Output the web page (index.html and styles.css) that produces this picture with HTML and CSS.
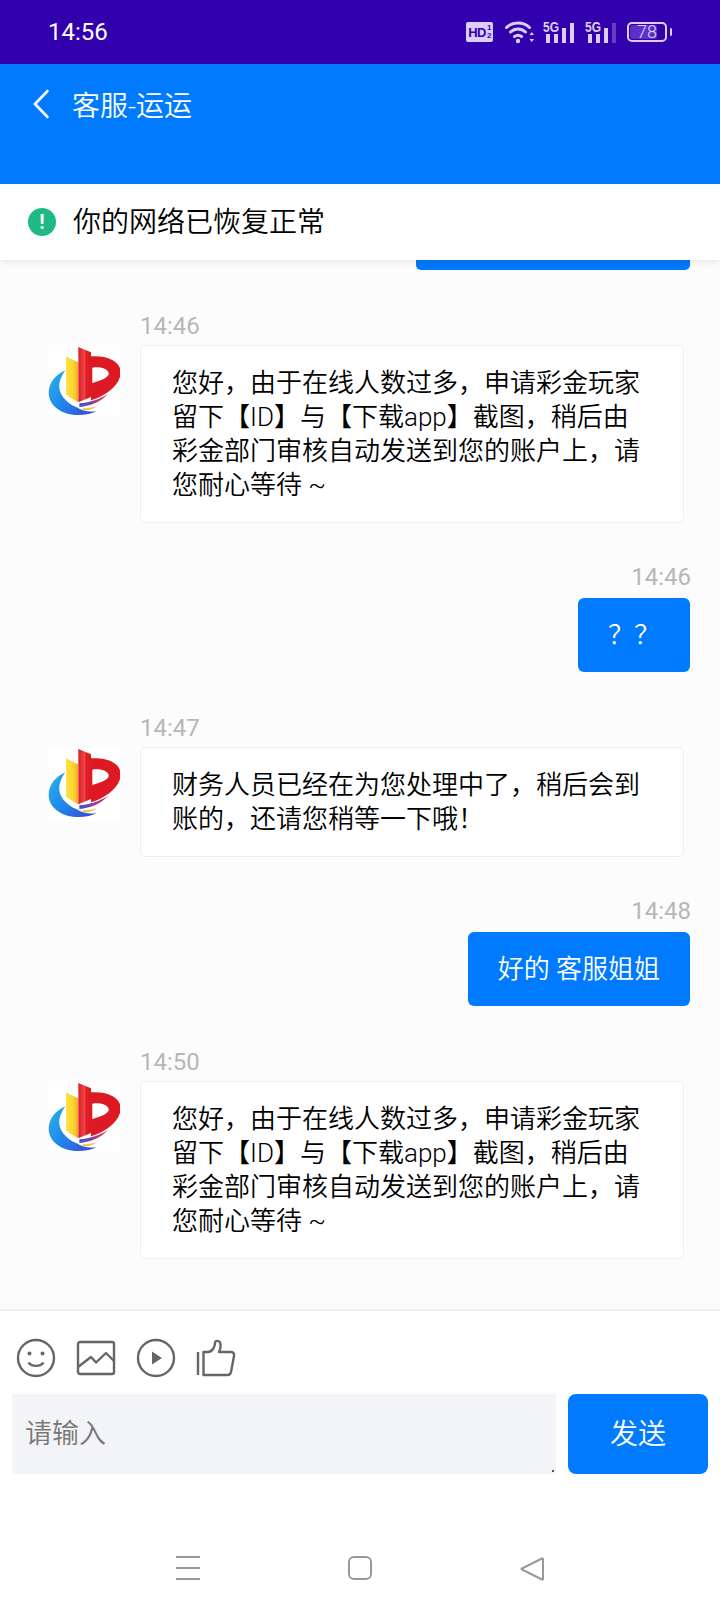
FILE: index.html
```html
<!DOCTYPE html>
<html lang="zh-CN">
<head>
<meta charset="utf-8">
<title>客服-运运</title>
<link rel="stylesheet" href="styles.css">
</head>
<body>
<svg class="defs" width="0" height="0" aria-hidden="true">
  <defs>
    <linearGradient id="lgBlue" x1="0" y1="0" x2="1" y2="0.7">
      <stop offset="0" stop-color="#2ab4ee"/>
      <stop offset="0.55" stop-color="#1f86ea"/>
      <stop offset="1" stop-color="#3550d8"/>
    </linearGradient>
    <linearGradient id="lgYellow" x1="0" y1="0" x2="1" y2="0">
      <stop offset="0" stop-color="#fce345"/>
      <stop offset="0.65" stop-color="#fbd22e"/>
      <stop offset="1" stop-color="#f2a52a"/>
    </linearGradient>
    <linearGradient id="lgBar" x1="0" y1="0" x2="1" y2="0">
      <stop offset="0" stop-color="#dd1a24"/>
      <stop offset="0.5" stop-color="#ec4a48"/>
      <stop offset="0.6" stop-color="#e01e28"/>
      <stop offset="1" stop-color="#dd1a24"/>
    </linearGradient>
    <linearGradient id="lgStripe" x1="0" y1="0" x2="1" y2="0">
      <stop offset="0" stop-color="#3b55d0"/>
      <stop offset="0.5" stop-color="#9a3a98"/>
      <stop offset="1" stop-color="#d83a50"/>
    </linearGradient>
    <symbol id="logo" viewBox="6 6 216 216">
      <rect x="6" y="6" width="216" height="216" fill="#fff"/>
      <path d="M58 82C26 96 8 122 8 150C8 184 40 210 80 215C110 218 135 213 152 204C130 208 108 204 92 193C58 178 36 152 40 122C42 108 50 94 58 82Z" fill="url(#lgBlue)"/>
      <path d="M60 40L96 58V178L60 155Z" fill="url(#lgYellow)"/>
      <path d="M97 12L135 28V162L97 178Z" fill="url(#lgBar)"/>
      <path d="M135 40C182 36 224 54 224 88C224 128 176 160 135 172Z" fill="#dd1a24"/>
      <path d="M139 74C164 70 188 78 188 92C188 104 164 112 139 120Z" fill="#fff"/>
      <path d="M100 181C132 178 162 168 187 152C165 176 135 188 100 192Z" fill="url(#lgStripe)"/>
      <path d="M110 196C126 196 140 194 153 189C142 198 128 203 112 203Z" fill="#e9c548"/>
    </symbol>
  </defs>
</svg>
<div class="page">
  <div class="status">
    <span class="clock">14:56</span>
    <div class="status-icons">
      <span class="hd"><span>HD</span><span class="hd-sub"><i>1</i><i>2</i></span></span>
      <svg class="wifi" width="29" height="24" viewBox="0 0 29 24">
        <path d="M1.500 7.500C7.500 1.500 18.500 1.500 24.500 7.500M5.500 12C10 8 16 8 20.500 12M9.500 16.500C11.500 15 14.500 15 16.500 16.500" fill="none" stroke="currentColor" stroke-width="3" stroke-linecap="round"/>
        <circle cx="13" cy="21" r="2.200" fill="currentColor"/>
        <path d="M24.500 15L29 15L26.750 12ZM24.500 19L29 19L26.750 22Z" fill="currentColor"/>
      </svg>
      <svg class="signal" width="32" height="28" viewBox="0 -4 32 28">
        <text x="0" y="12" class="g5" textLength="16" lengthAdjust="spacingAndGlyphs">5G</text>
        <rect x="3" y="14" width="4" height="9" fill="currentColor"/>
        <rect x="11" y="14" width="4" height="9" fill="currentColor"/>
        <rect x="19" y="8" width="4" height="15" fill="currentColor"/>
        <rect x="27" y="3" width="4" height="20" fill="currentColor"/>
      </svg>
      <svg class="signal" width="32" height="28" viewBox="0 -4 32 28">
        <text x="0" y="12" class="g5" textLength="16" lengthAdjust="spacingAndGlyphs">5G</text>
        <rect x="3" y="14" width="4" height="9" fill="currentColor"/>
        <rect x="11" y="14" width="4" height="9" fill="currentColor"/>
        <rect x="19" y="8" width="4" height="15" fill="currentColor"/>
        <rect x="27" y="3" width="4" height="20" fill="currentColor" opacity=".3"/>
      </svg>
      <span class="battery"><span class="battery-fill"></span><span class="battery-num">78</span></span>
    </div>
  </div>

  <header class="topbar">
    <svg class="back" width="18" height="30" viewBox="0 0 18 30">
      <path d="M15.500 2L3 15L15.500 28" fill="none" stroke="#fff" stroke-width="2.600" stroke-linecap="round" stroke-linejoin="round"/>
    </svg>
    <span class="title">客服-运运</span>
  </header>

  <main class="chat">
    <div class="notice">
      <span class="notice-dot">!</span>
      <span class="notice-text">你的网络已恢复正常</span>
    </div>

    <div class="stub"></div>

    <section class="msg msg-left">
      <svg class="avatar" width="72" height="72"><use href="#logo"/></svg>
      <div class="msg-body">
        <div class="time">14:46</div>
        <div class="bubble">您好，由于在线人数过多，申请彩金玩家留下【ID】与【下载app】截图，稍后由彩金部门审核自动发送到您的账户上，请您耐心等待 ~</div>
      </div>
    </section>

    <section class="msg msg-right">
      <div class="time">14:46</div>
      <div class="bubble-me">？？</div>
    </section>

    <section class="msg msg-left">
      <svg class="avatar" width="72" height="72"><use href="#logo"/></svg>
      <div class="msg-body">
        <div class="time">14:47</div>
        <div class="bubble">财务人员已经在为您处理中了，稍后会到账的，还请您稍等一下哦！</div>
      </div>
    </section>

    <section class="msg msg-right">
      <div class="time">14:48</div>
      <div class="bubble-me">好的 客服姐姐</div>
    </section>

    <section class="msg msg-left">
      <svg class="avatar" width="72" height="72"><use href="#logo"/></svg>
      <div class="msg-body">
        <div class="time">14:50</div>
        <div class="bubble">您好，由于在线人数过多，申请彩金玩家留下【ID】与【下载app】截图，稍后由彩金部门审核自动发送到您的账户上，请您耐心等待 ~</div>
      </div>
    </section>
  </main>

  <footer class="composer">
    <div class="tools">
      <svg width="40" height="40" viewBox="0 0 40 40" class="tool">
        <circle cx="20" cy="20" r="18" class="ln"/>
        <circle cx="13.500" cy="15.500" r="2" class="fl"/>
        <circle cx="26.500" cy="15.500" r="2" class="fl"/>
        <path d="M12.500 24.500C16 29 24 29 27.500 24.500" class="ln"/>
      </svg>
      <svg width="40" height="40" viewBox="0 0 40 40" class="tool">
        <rect x="2" y="4" width="36" height="32" rx="2" class="ln"/>
        <path d="M2 29L15 19L20 24.500L30 15L38 23" class="ln"/>
      </svg>
      <svg width="40" height="40" viewBox="0 0 40 40" class="tool">
        <circle cx="20" cy="20" r="18" class="ln"/>
        <path d="M16 13.500L26 20L16 26.500Z" class="fl"/>
      </svg>
      <svg width="40" height="40" viewBox="0 0 40 40" class="tool">
        <path d="M2 14V37" class="ln"/>
        <path d="M7.500 14H12C16 14 19 9 19 5C19 2 24 2 24.500 6C25 9 24 12 23 14H35C37.500 14 38.500 16 38 18L35 34C34.500 36 33.500 37 31.500 37H7.500Z" class="ln"/>
      </svg>
    </div>
    <div class="input-row">
      <div class="input"><span class="placeholder">请输入</span><i class="grip"></i></div>
      <button class="send" type="button"><span class="send-text">发送</span></button>
    </div>
  </footer>

  <nav class="navbar">
    <svg width="24" height="24" viewBox="0 0 24 24"><path d="M0 1H24M0 12H24M0 23H24" class="nav"/></svg>
    <svg width="24" height="24" viewBox="0 0 24 24"><rect x="1" y="1" width="22" height="22" rx="5" class="nav"/></svg>
    <svg width="24" height="26" viewBox="0 0 24 26"><path d="M22 2.500Q23 2 23 3.500V22.500Q23 24 22 23.500L2 13.500Q1 13 2 12.500Z" class="nav"/></svg>
  </nav>
</div>
</body>
</html>
```
FILE: styles.css
```css
* { box-sizing: border-box; }
html, body { margin: 0; padding: 0; }
body {
  width: 720px;
  height: 1612px;
  overflow: hidden;
  background: #fff;
  font-family: Roboto, "Noto Sans CJK SC", sans-serif;
}
.defs { display: block; height: 0; }
.page { display: flex; flex-direction: column; height: 1612px; }

/* status bar */
.status {
  height: 64px;
  flex: none;
  background: #3300ae;
  color: #dccdfb;
  display: flex;
  align-items: center;
  justify-content: space-between;
  padding: 0 53px 0 48px;
}
.clock { color: #fff; font-size: 24px; font-weight: 400; line-height: 1; }
.status-icons { display: flex; align-items: center; gap: 10px; }
.hd {
  width: 27px;
  height: 20px;
  background: #dccdfb;
  color: #3300ae;
  border-radius: 2px;
  display: flex;
  align-items: center;
  justify-content: center;
  font: 700 13px/1 "Liberation Sans", sans-serif;
  letter-spacing: -0.5px;
  margin-right: 2px;
}
.hd-sub { display: flex; flex-direction: column; margin-left: 1px; }
.hd-sub i { font-style: normal; font-size: 8px; line-height: 8px; }
.wifi { display: block; margin-right: -1px; }
.signal { display: block; margin-top: -4px; }
.g5 { font: 700 15px "Liberation Sans", sans-serif; fill: currentColor; }
.battery {
  position: relative;
  width: 40px;
  height: 20px;
  border: 2px solid #dccdfb;
  border-radius: 5px;
  font-size: 18px;
  font-weight: 300;
  display: flex;
  align-items: center;
  justify-content: center;
}
.battery::after {
  content: "";
  position: absolute;
  right: -7px;
  top: 4px;
  width: 2px;
  height: 8px;
  background: #dccdfb;
  border-radius: 1px;
}
.battery-fill {
  position: absolute;
  left: 1px; top: 1px; bottom: 1px;
  width: 27px;
  background: #5a30c8;
  border-radius: 3px;
}
.battery-num { position: relative; line-height: 1; color: #e4d8ff; }

/* header */
.topbar {
  height: 120px;
  flex: none;
  background: #007aff;
  display: flex;
  align-items: flex-start;
  padding: 25px 0 0 32px;
  gap: 22px;
}
.back { display: block; }
.title { color: #fff; font-size: 28px; line-height: 30px; margin-top: 3px; font-weight: 350; }

/* chat */
.chat {
  position: relative;
  height: 1125px;
  flex: none;
  overflow: hidden;
  background: #fcfcfc;
}
.notice {
  position: absolute;
  left: 0; right: 0; top: 0;
  height: 76px;
  background: #fff;
  box-shadow: 0 3px 8px rgba(0, 0, 0, .08);
  display: flex;
  align-items: center;
  padding-left: 28px;
  gap: 17px;
  font-size: 28px;
  font-weight: 350;
  color: #000;
}
.notice-text { margin-top: -4px; }
.notice-dot {
  width: 28px;
  height: 28px;
  border-radius: 50%;
  background: #1fb985;
  color: #fff;
  font-size: 20px;
  font-weight: 700;
  line-height: 28px;
  text-align: center;
}
.stub {
  width: 274px;
  height: 86px;
  margin-left: 416px;
  background: #007aff;
  border-radius: 0 0 5px 5px;
}
.msg { display: flex; }
.msg-left { margin-top: 43px; padding: 0 36px 0 48px; }
.msg-right { flex-direction: column; align-items: flex-end; padding-right: 30px; margin-top: 41px; }
.avatar { flex: none; display: block; margin-top: 32px; }
.msg-body { flex: 1; margin-left: 20px; }
.time {
  font-size: 24px;
  line-height: 26px;
  color: #b7b7b7;
  margin-bottom: 6px;
}
.msg-right .time { margin-right: -1px; margin-bottom: 8px; }
.bubble {
  background: #fff;
  border: 1px solid #eee;
  border-radius: 6px;
  padding: 20px 30px 20px 31px;
  font-size: 26px;
  font-weight: 350;
  line-height: 34px;
  color: #000;
}
.bubble-me {
  background: #007aff;
  color: #fff;
  border-radius: 6px;
  padding: 20px 30px;
  font-size: 26px;
  font-weight: 350;
  line-height: 34px;
}

/* composer */
.composer {
  flex: 1;
  background: #fff;
  border-top: 2px solid #eee;
  display: flex;
  flex-direction: column;
  padding: 0 12px;
}
.tools { display: flex; gap: 20px; padding: 27px 0 0 4px; }
.tool { display: block; }
.ln { fill: none; stroke: #666; stroke-width: 2.400; stroke-linejoin: round; }
.fl { fill: #666; }
.input-row { display: flex; gap: 12px; margin-top: 16px; }
.input {
  position: relative;
  width: 544px;
  height: 80px;
  background: #f3f4f8;
  display: flex;
  align-items: center;
  padding-left: 13px;
  font-size: 27px;
  font-weight: 350;
  color: #777;
}
.placeholder { margin-top: -6px; }
.grip {
  position: absolute;
  right: 2px;
  bottom: 2px;
  width: 2px;
  height: 2px;
  background: #555;
}
.send {
  width: 140px;
  height: 80px;
  border: 0;
  border-radius: 8px;
  background: #007aff;
  color: #fff;
  font: inherit;
  font-size: 28px;
  font-weight: 350;
  padding: 0 0 5px;
}

/* navigation bar */
.navbar {
  flex: none;
  height: 84px;
  background: #fff;
  display: flex;
  align-items: flex-start;
  padding: 28px 0 0 176px;
  gap: 148px;
}
.navbar svg { display: block; }
.nav { fill: none; stroke: #999; stroke-width: 2; stroke-linejoin: round; }
```
